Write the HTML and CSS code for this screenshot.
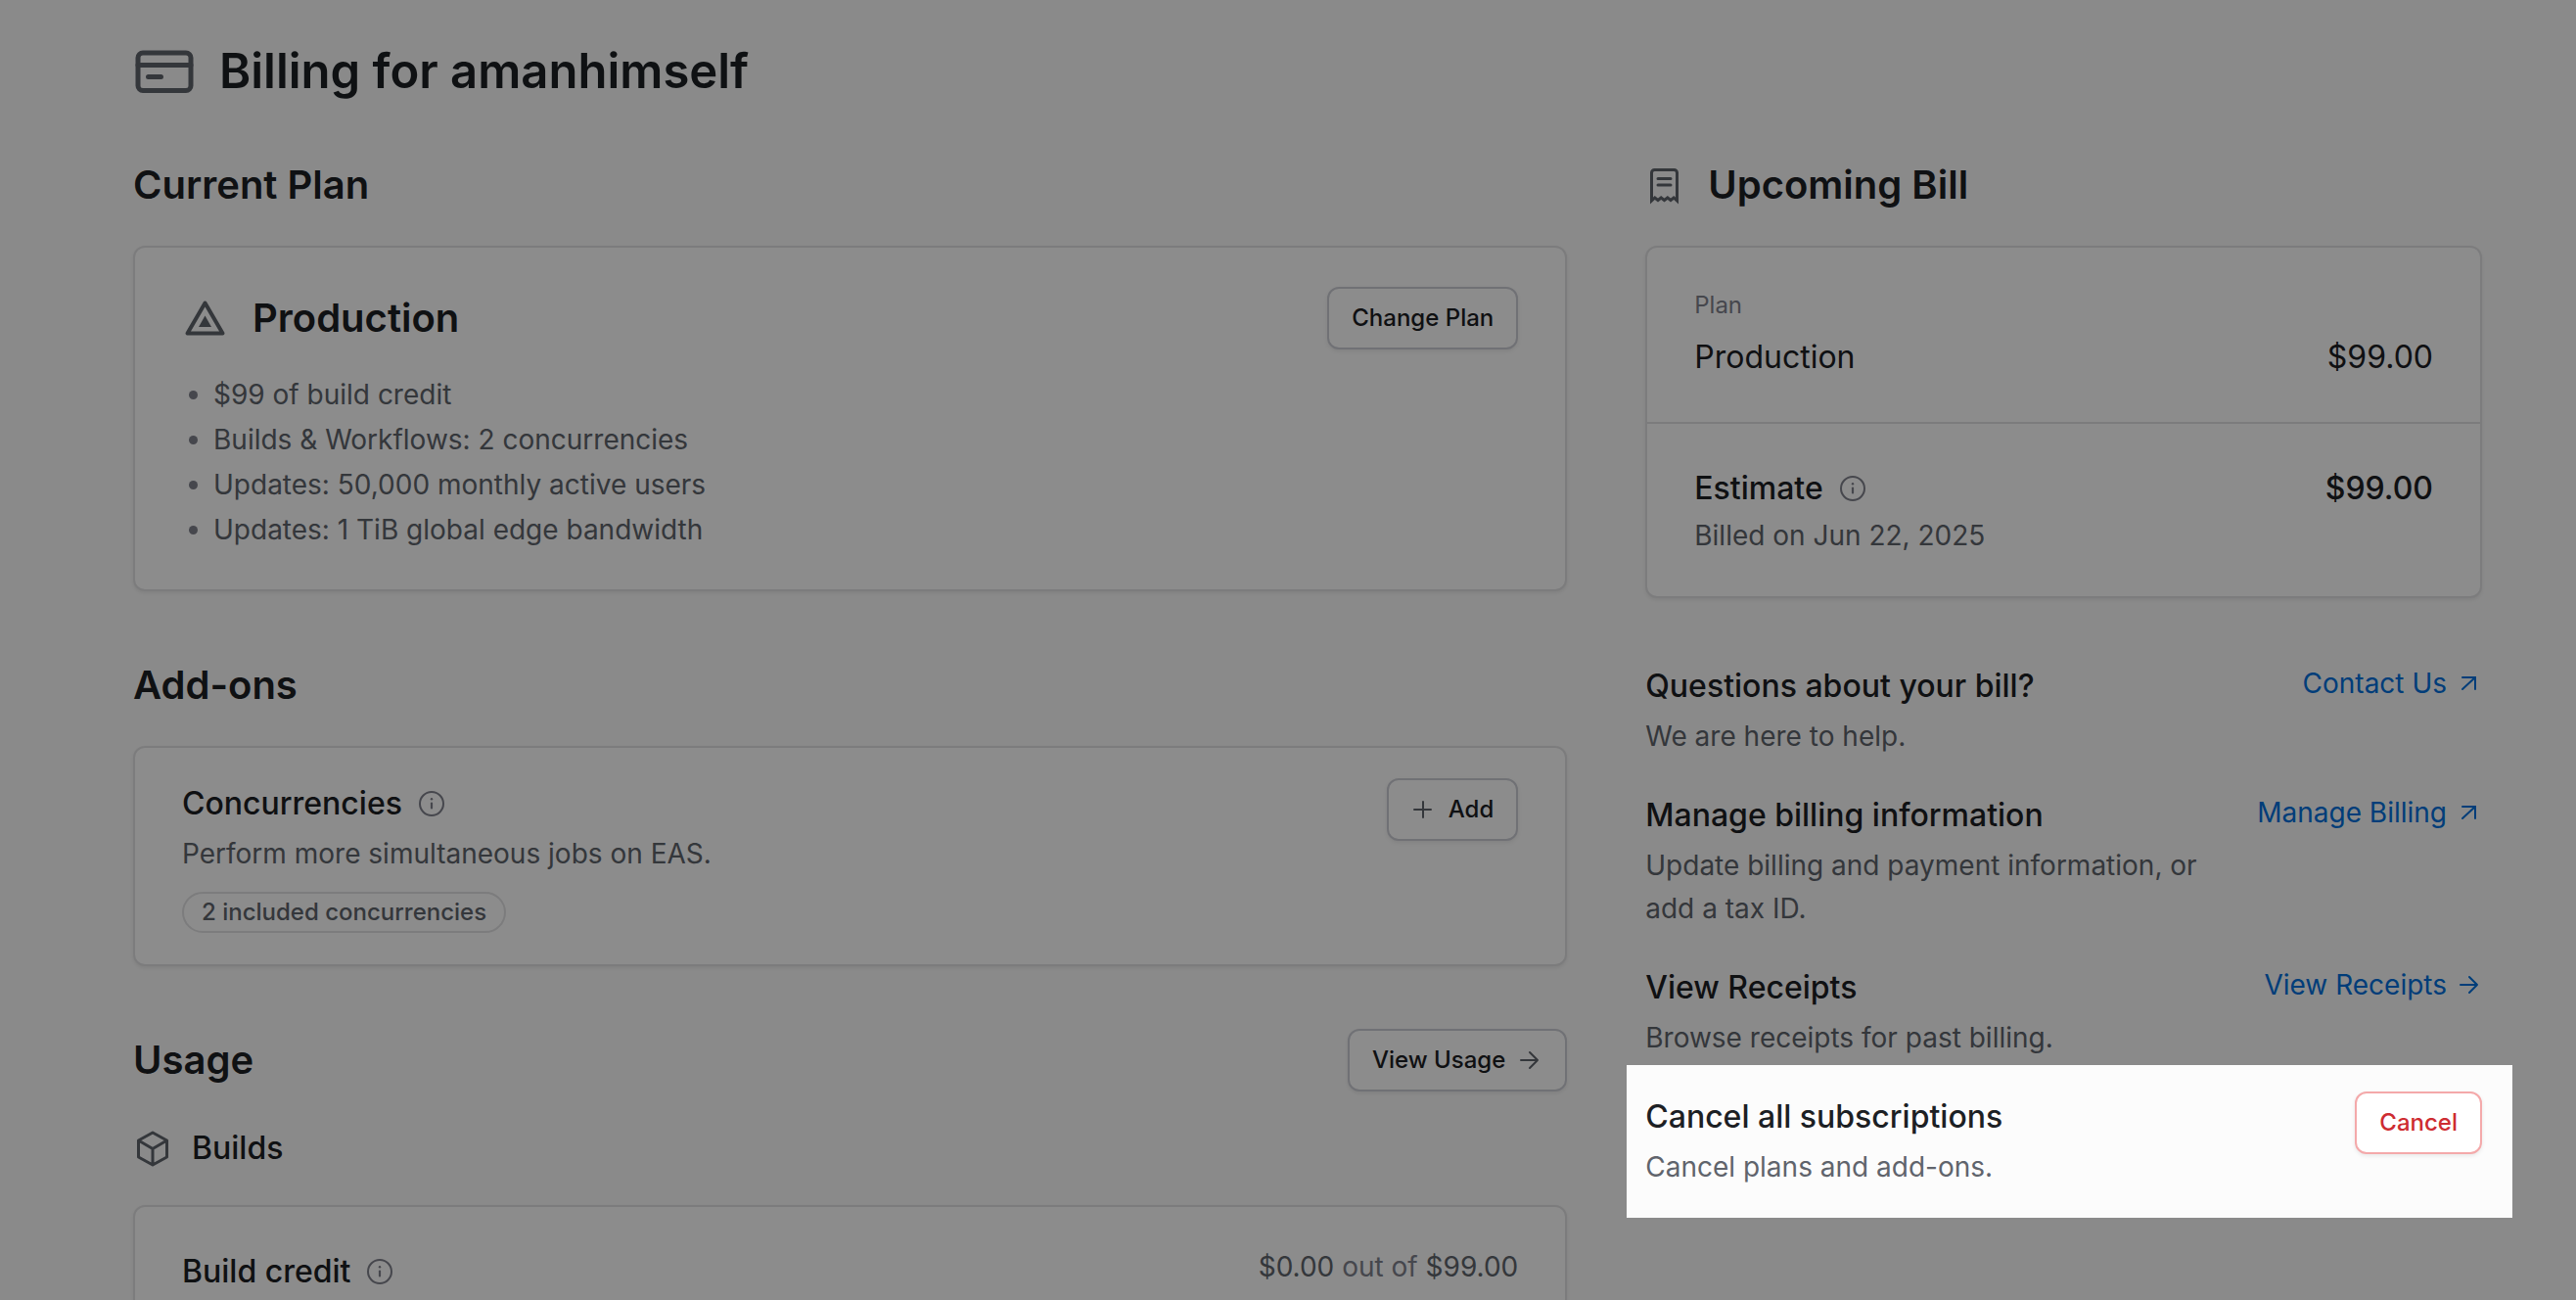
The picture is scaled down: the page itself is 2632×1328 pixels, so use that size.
FILE: index.html
```html
<!DOCTYPE html>
<html lang="en">
<head>
<meta charset="utf-8">
<title>Billing for amanhimself</title>
<meta name="viewport" content="width=device-width, initial-scale=1">
<link rel="stylesheet" href="styles.css">
</head>
<body>
<svg class="sprite" aria-hidden="true">
  <symbol id="info" viewBox="0 0 28 28">
    <circle cx="14" cy="14" r="12" fill="none" stroke="currentColor" stroke-width="2"/>
    <path d="M14 13.500v5" fill="none" stroke="currentColor" stroke-width="2.200" stroke-linecap="round"/>
    <circle cx="14" cy="9.200" r="1.200" fill="currentColor"/>
  </symbol>
  <symbol id="arrow-right" viewBox="0 0 24 24">
    <path d="M2 12h17M11 4l8 8-8 8" fill="none" stroke="currentColor" stroke-width="2" stroke-linecap="round" stroke-linejoin="round"/>
  </symbol>
  <symbol id="arrow-up-right" viewBox="0 0 24 24">
    <path d="M4 18L17 6M4 6h13v12" fill="none" stroke="currentColor" stroke-width="2" stroke-linecap="round" stroke-linejoin="miter"/>
  </symbol>
</svg>

<main class="page">
  <header class="page-header">
    <svg class="icon-page" viewBox="0 0 64 64" aria-hidden="true">
      <rect x="5" y="13" width="54" height="38.500" rx="5" fill="none" stroke="currentColor" stroke-width="5"/>
      <path d="M5 25.500h54M15.500 37.500h13" fill="none" stroke="currentColor" stroke-width="5" stroke-linecap="round"/>
    </svg>
    <h1>Billing for amanhimself</h1>
  </header>

  <div class="columns">
    <div class="column">
      <section class="section">
        <div class="section-head"><h2>Current Plan</h2></div>
        <div class="card card-plan">
          <div class="plan-head">
            <div class="plan-name">
              <svg class="icon-plan" viewBox="0 0 48 48" aria-hidden="true">
                <path d="M23.500 8.500L5.500 39.500h36z" fill="none" stroke="currentColor" stroke-width="4" stroke-linejoin="round"/>
                <path d="M23.500 21.500l6.500 11.500h-13z" fill="currentColor"/>
              </svg>
              <h2>Production</h2>
            </div>
            <button type="button" class="button">Change Plan</button>
          </div>
          <ul class="features">
            <li>$99 of build credit</li>
            <li>Builds &amp; Workflows: 2 concurrencies</li>
            <li>Updates: 50,000 monthly active users</li>
            <li>Updates: 1 TiB global edge bandwidth</li>
          </ul>
        </div>
      </section>

      <section class="section">
        <div class="section-head"><h2>Add-ons</h2></div>
        <div class="card card-addon">
          <div class="entry">
            <h3>Concurrencies <svg class="icon-info"><use href="#info"/></svg></h3>
            <p>Perform more simultaneous jobs on EAS.</p>
            <span class="badge">2 included concurrencies</span>
          </div>
          <button type="button" class="button">
            <svg class="icon-button" viewBox="0 0 24 24" aria-hidden="true"><path d="M12 4v16M3 12h17" fill="none" stroke="currentColor" stroke-width="2" stroke-linecap="round"/></svg>
            Add
          </button>
        </div>
      </section>

      <section class="section">
        <div class="section-head">
          <h2>Usage</h2>
          <button type="button" class="button">View Usage <svg class="icon-button"><use href="#arrow-right"/></svg></button>
        </div>
        <div class="usage-group">
          <svg class="icon-group" viewBox="0 0 40 40" aria-hidden="true">
            <path d="M20 4L34.500 12v17L20 37 5.500 29V12zM5.500 12L20 20.500 34.500 12M20 20.500V37" fill="none" stroke="currentColor" stroke-width="3" stroke-linejoin="round"/>
          </svg>
          <h3>Builds</h3>
        </div>
        <div class="card card-usage">
          <h3>Build credit <svg class="icon-info"><use href="#info"/></svg></h3>
          <p>$0.00 <span class="faint">out of</span> $99.00</p>
        </div>
      </section>
    </div>

    <aside class="column">
      <section class="section">
        <div class="section-head bill-head">
          <svg class="icon-bill" viewBox="0 0 40 40" aria-hidden="true">
            <path d="M6.500 36V7.500a3 3 0 0 1 3-3h20a3 3 0 0 1 3 3V36l-3.300-3-3.200 2.500-3.200-2.500-3.300 2.500-3.300-2.500-3.200 2.500-3.200-2.500z" fill="none" stroke="currentColor" stroke-width="3"/>
            <path d="M13 13.500h13M13 20h13" fill="none" stroke="currentColor" stroke-width="3" stroke-linecap="round"/>
          </svg>
          <h2>Upcoming Bill</h2>
        </div>
        <div class="card">
          <div class="bill-part">
            <span class="label">Plan</span>
            <div class="bill-line"><span>Production</span><span>$99.00</span></div>
          </div>
          <div class="bill-part">
            <div class="bill-line strong">
              <h3>Estimate <svg class="icon-info"><use href="#info"/></svg></h3>
              <span>$99.00</span>
            </div>
            <p>Billed on Jun 22, 2025</p>
          </div>
        </div>
      </section>

      <div class="actions">
        <div class="action">
          <div class="entry"><h3>Questions about your bill?</h3><p>We are here to help.</p></div>
          <a href="#contact">Contact Us <svg class="icon-link"><use href="#arrow-up-right"/></svg></a>
        </div>
        <div class="action">
          <div class="entry"><h3>Manage billing information</h3><p>Update billing and payment information, or add a tax ID.</p></div>
          <a href="#manage">Manage Billing <svg class="icon-link"><use href="#arrow-up-right"/></svg></a>
        </div>
        <div class="action">
          <div class="entry"><h3>View Receipts</h3><p>Browse receipts for past billing.</p></div>
          <a href="#receipts">View Receipts <svg class="icon-link"><use href="#arrow-right"/></svg></a>
        </div>
        <div class="action spotlight">
          <div class="entry"><h3>Cancel all subscriptions</h3><p>Cancel plans and add-ons.</p></div>
          <button type="button" class="button danger">Cancel</button>
        </div>
      </div>
    </aside>
  </div>
</main>
</body>
</html>
```
FILE: styles.css
```css
:root {
  --text: #1c2024;
  --text-secondary: #60646c;
  --text-tertiary: #80828d;
  --border: #e2e2e4;
  --border-button: #cdced6;
  --link: #0070dc;
  --danger: #ce2c31;
  --danger-border: #f4a9aa;
}

* {
  box-sizing: border-box;
}

body {
  margin: 0;
  background: #fcfcfc;
  color: var(--text);
  font-family: Inter, "Liberation Sans", sans-serif;
  font-size: 28px;
  line-height: 44px;
}

h1, h2, h3, p, ul {
  margin: 0;
  padding: 0;
}

svg {
  flex: none;
  display: block;
}

.sprite {
  position: absolute;
  width: 0;
  height: 0;
}

.page {
  height: 100vh;
  overflow: hidden;
  padding: 41px 96px 0 136px;
}

.page-header {
  display: flex;
  align-items: center;
  gap: 24px;
  margin-bottom: 52px;
}

h1 {
  font-size: 49px;
  line-height: 60px;
  font-weight: 600;
}

h2 {
  font-size: 40px;
  line-height: 52px;
  font-weight: 600;
}

h3 {
  display: flex;
  align-items: center;
  gap: 16px;
  font-size: 32px;
  line-height: 52px;
  font-weight: 500;
}

p {
  color: var(--text-secondary);
}

.icon-page, .icon-plan, .icon-bill, .icon-group, .icon-button {
  color: var(--text-secondary);
}

.icon-page { width: 64px; height: 64px; }
.icon-plan { width: 48px; height: 48px; }
.icon-bill, .icon-group { width: 40px; height: 40px; }
.icon-button, .icon-link { width: 24px; height: 24px; }
.icon-info { width: 28px; height: 28px; color: var(--text-tertiary); }

.columns {
  display: grid;
  grid-template-columns: 12fr 7fr;
  gap: 80px;
  align-items: start;
}

.column {
  display: grid;
  gap: 64px;
}

.section-head {
  display: flex;
  align-items: center;
  justify-content: space-between;
  height: 64px;
  margin-bottom: 30px;
}

.bill-head {
  justify-content: flex-start;
  gap: 24px;
}

.card {
  background: #fff;
  border: 2px solid var(--border);
  border-radius: 12px;
  box-shadow: 0 2px 4px rgba(0, 0, 0, 0.08);
}

.button {
  display: flex;
  align-items: center;
  gap: 14px;
  height: 64px;
  padding: 0 23px;
  border: 2px solid var(--border-button);
  border-radius: 12px;
  background: #fff;
  box-shadow: 0 2px 4px rgba(0, 0, 0, 0.08);
  color: var(--text);
  font: inherit;
  font-size: 24px;
  font-weight: 500;
  white-space: nowrap;
}

.danger {
  border-color: var(--danger-border);
  color: var(--danger);
}

.card-plan {
  padding: 40px 48px 38px;
}

.plan-head, .plan-name {
  display: flex;
  align-items: center;
}

.plan-head {
  justify-content: space-between;
  margin-bottom: 23px;
}

.plan-name {
  gap: 24px;
}

.features {
  list-style: none;
  color: var(--text-secondary);
  line-height: 46px;
}

.features li {
  display: flex;
  align-items: center;
  gap: 16px;
  padding-left: 7px;
}

.features li::before {
  content: "";
  width: 9px;
  height: 9px;
  border-radius: 50%;
  background: var(--text-tertiary);
}

.card-addon {
  display: flex;
  align-items: flex-start;
  justify-content: space-between;
  padding: 31px 48px 32px;
}

.entry {
  display: grid;
  justify-items: start;
  gap: 3px;
}

.badge {
  margin-top: 14px;
  padding: 0 18px;
  border: 2px solid var(--border);
  border-radius: 21px;
  color: var(--text-secondary);
  font-size: 24px;
  line-height: 38px;
  font-weight: 500;
}

.usage-group {
  display: flex;
  align-items: center;
  gap: 20px;
  height: 40px;
  margin: 38px 0;
}

.card-usage {
  display: flex;
  align-items: flex-start;
  justify-content: space-between;
  padding: 40px 48px;
}

.card-usage p {
  line-height: 42px;
}

.faint {
  color: var(--text-tertiary);
}

.bill-part {
  padding: 40px 48px;
}

.bill-part + .bill-part {
  border-top: 2px solid var(--border);
}

.label {
  display: block;
  margin-bottom: 8px;
  color: var(--text-tertiary);
  font-size: 24px;
  line-height: 38px;
}

.bill-line {
  display: flex;
  justify-content: space-between;
  font-size: 32px;
  line-height: 52px;
}

.strong {
  font-weight: 500;
}

.actions {
  display: grid;
  gap: 33px;
}

.action {
  display: flex;
  align-items: flex-start;
  justify-content: space-between;
  gap: 40px;
}

.action a {
  display: flex;
  align-items: center;
  gap: 12px;
  color: var(--link);
  line-height: 46px;
  text-decoration: none;
  white-space: nowrap;
}

.spotlight {
  position: relative;
}

/* Dims everything on the page except the highlighted row. */
.spotlight::after {
  content: "";
  position: absolute;
  inset: -27px -31px -30px -19px;
  box-shadow: 0 0 0 200vmax rgba(0, 0, 0, 0.45);
  pointer-events: none;
}
```
